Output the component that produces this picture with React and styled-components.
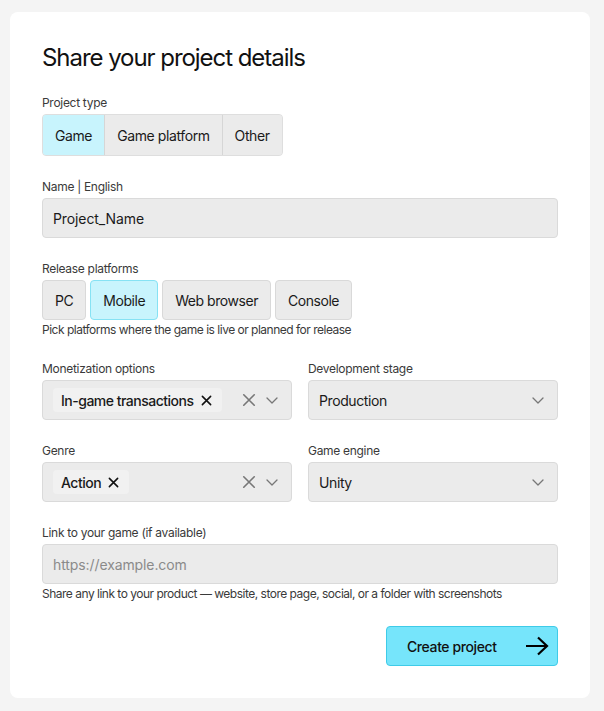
import React from 'react'
import styled, { createGlobalStyle } from 'styled-components'

const GlobalStyle = createGlobalStyle`
  * { box-sizing: border-box; }
  body {
    margin: 0;
    background: #f4f4f4;
    font-family: Inter, "Noto Sans", sans-serif;
    color: #1a1a1a;
  }
`

const Page = styled.div`
  padding: 12px 14px 14px 10px;
`

const Card = styled.form`
  background: #fff;
  border-radius: 8px;
  padding: 30px 32px 32px 32px;
  display: flex;
  flex-direction: column;
  gap: 22px;
`

const Title = styled.h1`
  margin: 0 0 -2px;
  font-size: 24px;
  line-height: 32px;
  font-weight: 400;
  letter-spacing: -1.05px;
  color: #111;
`

const Field = styled.div`
  display: flex;
  flex-direction: column;
  min-width: 0;
`

const Label = styled.label`
  font-size: 12px;
  line-height: 16px;
  letter-spacing: -0.3px;
  color: #3a3a3a;
  margin: 1px 0 3px;
`

const Hint = styled.p`
  margin: 2px 0 0;
  font-size: 12px;
  line-height: 16px;
  letter-spacing: -0.5px;
  color: #3a3a3a;
`

const Segmented = styled.div`
  display: inline-flex;
  align-self: flex-start;
  height: 42px;
  border: 1px solid #dedede;
  border-radius: 4px;
  overflow: hidden;
  background: #ebebeb;
`

const Segment = styled.button`
  border: 0;
  border-left: ${p => (p.first ? '0' : '1px solid #d6d6d6')};
  background: ${p => (p.active ? '#c8f4fd' : '#ebebeb')};
  padding: 0 12px;
  font: inherit;
  font-size: 14px;
  letter-spacing: -0.4px;
  color: #1a1a1a;
`

const Chips = styled.div`
  display: flex;
  gap: 4px;
`

const Toggle = styled.button`
  height: 40px;
  padding: 0 12px;
  border-radius: 4px;
  border: 1px solid ${p => (p.active ? '#86e2f4' : '#d9d9d9')};
  background: ${p => (p.active ? '#c8f4fd' : '#ebebeb')};
  font: inherit;
  font-size: 14px;
  letter-spacing: -0.45px;
  color: #1a1a1a;
`

const Input = styled.input`
  height: 40px;
  width: 100%;
  padding: 0 10px;
  border: 1px solid #dadada;
  border-radius: 4px;
  background: #ebebeb;
  font: inherit;
  font-size: 14px;
  letter-spacing: -0.1px;
  color: #1a1a1a;
  outline: none;

  &::placeholder {
    color: #8a8a8a;
  }
`

const Row = styled.div`
  display: grid;
  grid-template-columns: 1fr 1fr;
  gap: 16px;
`

const Select = styled.div`
  height: 40px;
  display: flex;
  align-items: center;
  padding: 0 13px 0 10px;
  border: 1px solid #dadada;
  border-radius: 4px;
  background: #ebebeb;
  font-size: 14px;
  letter-spacing: -0.4px;
  color: #1a1a1a;
`

const Value = styled.span`
  flex: 1;
`

const Tag = styled.span`
  display: inline-flex;
  align-items: center;
  gap: 7px;
  height: 24px;
  padding: 0 10px 0 8px;
  border-radius: 4px;
  background: #f1f1f1;
  font-weight: 500;
  font-size: 14px;
  letter-spacing: -0.5px;
`

const Spacer = styled.span`
  flex: 1;
`

const Icons = styled.span`
  display: flex;
  align-items: center;
  gap: 10px;
  color: #777;
`

const Footer = styled.div`
  display: flex;
  justify-content: flex-end;
  margin-top: 2px;
`

const Submit = styled.button`
  width: 172px;
  height: 40px;
  display: flex;
  align-items: center;
  justify-content: space-between;
  padding: 0 8px 0 20px;
  border: 1px solid #3fcbe8;
  border-radius: 4px;
  background: #76e5fb;
  font: inherit;
  font-size: 14px;
  font-weight: 500;
  letter-spacing: -0.4px;
  color: #111;
`

const Cross = ({ size = 12, width = 1.6, color = 'currentColor' }) => (
  <svg width={size} height={size} viewBox="0 0 12 12" fill="none">
    <path d="M1.5 1.5l9 9M10.5 1.5l-9 9" stroke={color} strokeWidth={width} strokeLinecap="round" />
  </svg>
)

const Chevron = () => (
  <svg width="12" height="7" viewBox="0 0 12 7" fill="none">
    <path d="M1 1l5 5 5-5" stroke="currentColor" strokeWidth="1.3" strokeLinecap="round" strokeLinejoin="round" />
  </svg>
)

const Arrow = () => (
  <svg width="24" height="20" viewBox="0 0 24 20" fill="none">
    <path d="M1 10h21M13 1.5l9 8.5-9 8.5" stroke="#000" strokeWidth="2.2" strokeLinejoin="miter" />
  </svg>
)

const MultiSelect = ({ tag }) => (
  <Select>
    <Tag>
      {tag}
      <Cross size={11} width={1.7} color="#111" />
    </Tag>
    <Spacer />
    <Icons>
      <Cross size={14} width={1.4} />
      <Chevron />
    </Icons>
  </Select>
)

const SingleSelect = ({ value }) => (
  <Select>
    <Value>{value}</Value>
    <Icons>
      <Chevron />
    </Icons>
  </Select>
)

export default function App() {
  return (
    <Page>
      <GlobalStyle />
      <Card onSubmit={e => e.preventDefault()}>
        <Title>Share your project details</Title>

        <Field>
          <Label>Project type</Label>
          <Segmented>
            <Segment type="button" first active>Game</Segment>
            <Segment type="button">Game platform</Segment>
            <Segment type="button">Other</Segment>
          </Segmented>
        </Field>

        <Field>
          <Label>Name | English</Label>
          <Input defaultValue="Project_Name" />
        </Field>

        <Field>
          <Label>Release platforms</Label>
          <Chips>
            <Toggle type="button">PC</Toggle>
            <Toggle type="button" active>Mobile</Toggle>
            <Toggle type="button">Web browser</Toggle>
            <Toggle type="button">Console</Toggle>
          </Chips>
          <Hint>Pick platforms where the game is live or planned for release</Hint>
        </Field>

        <Row>
          <Field>
            <Label>Monetization options</Label>
            <MultiSelect tag="In-game transactions" />
          </Field>
          <Field>
            <Label>Development stage</Label>
            <SingleSelect value="Production" />
          </Field>
        </Row>

        <Row>
          <Field>
            <Label>Genre</Label>
            <MultiSelect tag="Action" />
          </Field>
          <Field>
            <Label>Game engine</Label>
            <SingleSelect value="Unity" />
          </Field>
        </Row>

        <Field>
          <Label>Link to your game (if available)</Label>
          <Input placeholder="https://example.com" />
          <Hint>Share any link to your product — website, store page, social, or a folder with screenshots</Hint>
        </Field>

        <Footer>
          <Submit type="submit">
            Create project
            <Arrow />
          </Submit>
        </Footer>
      </Card>
    </Page>
  )
}
